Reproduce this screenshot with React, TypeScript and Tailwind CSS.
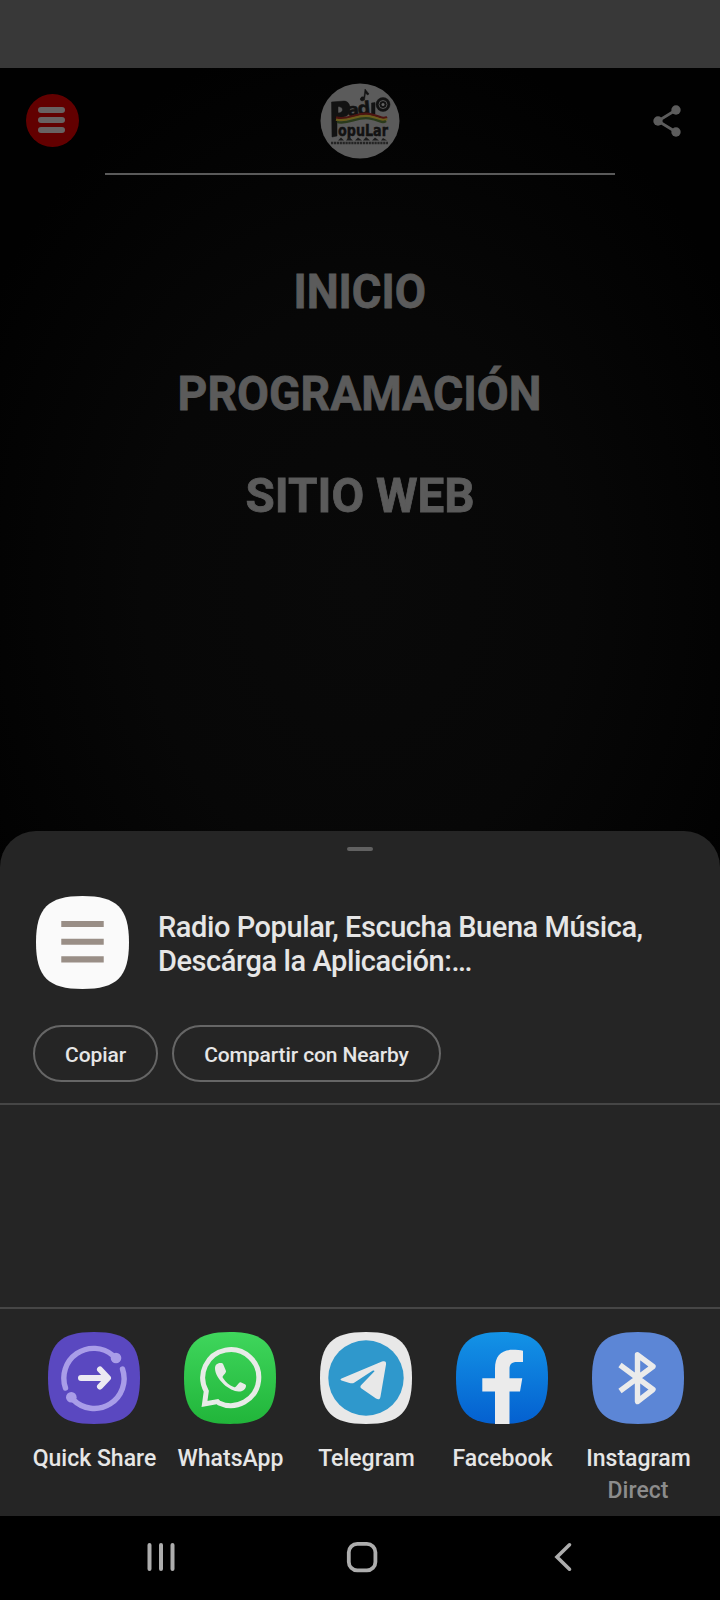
import React from "react";

const SQUIRCLE = "M0 46C0 12 12 0 46 0S92 12 92 46 80 92 46 92 0 80 0 46Z";

const menuItems = [
    { label: "INICIO", className: "scale-x-[0.925]" },
    { label: "PROGRAMACIÓN", className: "scale-x-[0.945]" },
    { label: "SITIO WEB", className: "scale-x-[0.97]" },
];

const targets = [
    { name: "Quick Share", icon: <QuickShareIcon /> },
    { name: "WhatsApp", icon: <WhatsAppIcon /> },
    { name: "Telegram", icon: <TelegramIcon /> },
    { name: "Facebook", icon: <FacebookIcon /> },
    { name: "Instagram", detail: "Direct", icon: <BluetoothIcon /> },
];

function QuickShareIcon() {
    return (
        <svg viewBox="0 0 92 92" className="size-[92px]">
            <path d={SQUIRCLE} fill="#5a48c0" />
            <g fill="none" stroke="#a99de8" strokeWidth="5.4" strokeLinecap="round">
                <path d="M17.500 56A29.800 29.800 0 0 1 65 23.500" />
                <path d="M74.500 37A29.800 29.800 0 0 1 25 67.500" />
            </g>
            <circle cx="68" cy="26" r="5.3" fill="#a99de8" />
            <circle cx="23.3" cy="65.3" r="5.3" fill="#a99de8" />
            <path d="M33 46H58M52 37.500L60 46L52 54.500" fill="none" stroke="#eceaf2" strokeWidth="6" strokeLinecap="round" strokeLinejoin="round" />
        </svg>
    );
}

function WhatsAppIcon() {
    return (
        <svg viewBox="0 0 92 92" className="size-[92px]">
            <defs>
                <linearGradient id="wa" x1="0" y1="0" x2="0" y2="1">
                    <stop offset="0" stopColor="#3fd65c" />
                    <stop offset="1" stopColor="#21b53a" />
                </linearGradient>
            </defs>
            <path d={SQUIRCLE} fill="url(#wa)" />
            <path d="M20.500 72L22.300 59.200A28 28 0 1 1 35 71L33.500 69.600Z" fill="none" stroke="#e8ebe8" strokeWidth="5" strokeLinejoin="miter" />
            <path d="M36.500 31c1.500 0 2.300.3 2.900 1.700l2.500 6c.4 1-.1 2-2.900 5.200-.6.7-.5 1.300 0 2 2.800 4.500 6.200 7.300 10.800 9.200.9.400 1.600.2 2.200-.5l3-3.700c.7-.8 1.400-.8 2.200-.4l3.800 1.800c1 .5 1.200 1 .9 2.500-.7 3-4 5-7.400 4.700-4.200-.4-10.200-2.900-15-7.600-5-4.900-8.500-10.800-8.500-15.500 0-3 1.800-5.400 5.500-5.400Z" fill="#e8ebe8" />
        </svg>
    );
}

function TelegramIcon() {
    return (
        <svg viewBox="0 0 92 92" className="size-[92px]">
            <path d={SQUIRCLE} fill="#e8e8e8" />
            <circle cx="46" cy="46" r="37.700" fill="#2f98cc" />
            <path d="M21.500 46.500L62 29.500C65 28.500 66.500 29.500 66 32.500L60.500 64.500C60 67.500 58.500 68 56 66.500L41.500 56.500C40 55.300 40 54.200 41.500 52.700L54.500 39.200C54.500 38.300 53.500 38.200 52.500 38.800L34.500 50.500C33 51.500 31.500 51.500 29.500 51L21.500 48.500C20.200 48 20.200 47.100 21.500 46.500Z" fill="#e8e8e8" />
        </svg>
    );
}

function FacebookIcon() {
    return (
        <svg viewBox="0 0 92 92" className="size-[92px]">
            <defs>
                <linearGradient id="fb" x1="0" y1="0" x2="0" y2="1">
                    <stop offset="0" stopColor="#1393e6" />
                    <stop offset="1" stopColor="#0460d0" />
                </linearGradient>
            </defs>
            <path d={SQUIRCLE} fill="url(#fb)" />
            <path d="M39 92V59.500H26.300V46.300H39V36.500C39 24 45 17.800 56.500 17.800C60.500 17.800 64.500 18.200 67 18.700V30H61C55.500 30 53.500 32.500 53.500 37V46.300H66.300L64 59.500H53.500V92Z" fill="#ebebeb" />
        </svg>
    );
}

function BluetoothIcon() {
    return (
        <svg viewBox="0 0 92 92" className="size-[92px]">
            <path d={SQUIRCLE} fill="#5c86d6" />
            <path d="M28 33L61 57.500L45.500 69.500V22.800L61 34.500L28 59" fill="none" stroke="#ebebeb" strokeWidth="5.400" strokeLinejoin="round" />
        </svg>
    );
}

function StationLogo() {
    return (
        <svg viewBox="0 0 80 76" className="h-[76px] w-[80px]" fontFamily="'DejaVu Sans', sans-serif" fontWeight="bold">
            <ellipse cx="40" cy="38" rx="39.500" ry="37.500" fill="#5b5b5b" />
            <g fill="#121212" stroke="#121212" strokeWidth=".5">
                <path d="M11.500 19L24 18C31 18 32 29 26.500 33L17 36V53L12 54ZM18 23.500V30C24 30 24 23.500 18 23.500Z" />
                <text x="28" y="33" fontSize="17" transform="rotate(-5 28 33)">a</text>
                <text x="38" y="32" fontSize="18" transform="rotate(-5 38 32)">d</text>
                <path d="M51.500 20L55 19.500V31H51.500Z" />
                <circle cx="63" cy="21.500" r="7" />
                <path d="M42 18A2.500 2 0 1 1 44 14L45 6L49 11L47.500 12L45.500 10L44.500 17Z" />
                <text x="18" y="53" fontSize="16" textLength="50" lengthAdjust="spacingAndGlyphs">opuLar</text>
            </g>
            <circle cx="63" cy="21.500" r="4" fill="none" stroke="#555" strokeWidth="1" />
            <circle cx="63" cy="21.500" r="1.500" fill="#656565" />
            <g fill="none" strokeWidth="2.400">
                <path d="M16 34.500C28 38 37 29 49 31S62 37 67 34" stroke="#4c1411" />
                <path d="M16 36.700C28 40 37 31.200 49 33.200S62 39 67 36" stroke="#6a5c1b" />
                <path d="M17 38.900C28 42 37 33.400 49 35.400S62 41 66 38" stroke="#2a3a1c" />
            </g>
            <g fill="#1c1c1c">
                <path d="M18 57.500L21 54.500L24 57.500ZM26 57.500L29 54L33 57.500ZM35 57.500L38 54.500L42 57.500ZM43 57.500L46 54L50 57.500ZM52 57.500L55 54.500L59 57.500ZM61 57.500L63 55L67 57.500Z" />
                <path d="M11 60H68" stroke="#242424" strokeWidth="2.500" strokeDasharray="2.200 .7" />
            </g>
        </svg>
    );
}

function Header() {
    return (
        <header className="flex flex-col items-center">
            <div className="flex h-[105px] w-full items-center justify-between px-[26px]">
                <button className="flex size-[53px] flex-col items-center justify-center gap-1 rounded-full bg-[#620000] pr-0.5 pb-px">
                    <span className="h-1.5 w-[27px] rounded-full bg-[#686262]" />
                    <span className="h-1.5 w-[27px] rounded-full bg-[#686262]" />
                    <span className="h-1.5 w-[27px] rounded-full bg-[#686262]" />
                </button>
                <StationLogo />
                <button className="flex w-[53px] justify-start pl-3">
                    <svg viewBox="0 0 28 34" className="h-[34px] w-7 shrink-0" fill="#5c5c5c">
                        <path d="M23 6L5 17L23 28" fill="none" stroke="#5c5c5c" strokeWidth="2.800" />
                        <circle cx="5" cy="17" r="4.700" />
                        <circle cx="23" cy="6" r="4.700" />
                        <circle cx="23" cy="28" r="4.700" />
                    </svg>
                </button>
            </div>
            <div className="h-0.5 w-[510px] bg-[#5a5a5a]" />
        </header>
    );
}

function ShareSheet() {
    return (
        <section className="flex h-[685px] flex-col rounded-t-[36px] bg-[#252525] text-[#e6e6e6]">
            <div className="mt-4 h-1 w-[26px] self-center rounded-full bg-[#616161]" />
            <div className="mt-[45px] flex h-[93px] items-center pl-9">
                <svg viewBox="0 0 92 92" className="size-[93px] shrink-0">
                    <path d={SQUIRCLE} fill="#fafafa" />
                    <path d="M25 27.700H67M25 45.200H67M25 62.700H67" stroke="#998e86" strokeWidth="6" />
                </svg>
                <p className="ml-[29px] pt-0.5 text-[29px] leading-[34px] font-medium tracking-[-0.43px] whitespace-nowrap">
                    Radio Popular, Escucha Buena Música,
                    <br />
                    Descárga la Aplicación:<span className="tracking-[-1.500px]">...</span>
                </p>
            </div>
            <div className="mt-9 flex gap-3.5 pl-[33px] text-[21px] font-medium tracking-[-0.1px]">
                <button className="h-[57px] w-[125px] rounded-full border-2 border-[#666] pt-1">Copiar</button>
                <button className="h-[57px] w-[269px] rounded-full border-2 border-[#666] pt-1">Compartir con Nearby</button>
            </div>
            <div className="mt-[21px] h-[206px] border-y-2 border-[#464646]" />
            <ul className="mt-[23px] flex pl-[26px]">
                {targets.map((target) => (
                    <li key={target.name} className="flex w-[136px] shrink-0 flex-col items-center text-[23px] leading-8 font-medium whitespace-nowrap">
                        {target.icon}
                        <span className="mt-[19px] pl-px">{target.name}</span>
                        {target.detail && <span className="text-[#8c8c8c]">{target.detail}</span>}
                    </li>
                ))}
            </ul>
        </section>
    );
}

function NavBar() {
    return (
        <nav className="flex h-[84px] items-start bg-black pt-[25px] pl-[146px]">
            <svg viewBox="0 0 30 32" className="h-8 w-[30px]" stroke="#adadad" strokeWidth="4" strokeLinecap="round">
                <path d="M3.500 4V28M15 4V28M26.500 4V28" />
            </svg>
            <svg viewBox="0 0 32 32" className="ml-[170px] size-8" fill="none" stroke="#adadad" strokeWidth="3.800">
                <rect x="2.800" y="2.800" width="26.600" height="26.600" rx="8.500" />
            </svg>
            <svg viewBox="0 0 20 32" className="ml-[175px] h-8 w-5" fill="none" stroke="#adadad" strokeWidth="3.600" strokeLinecap="round">
                <path d="M16.500 3.800L4 16L16.500 28.200" />
            </svg>
        </nav>
    );
}

export default function App() {
    return (
        <div className="flex h-[1600px] w-[720px] flex-col overflow-hidden bg-black font-[Roboto,sans-serif]">
            <div className="h-[68px] shrink-0 bg-[#383838]" />
            {/* runs on behind the sheet's rounded corners */}
            <div className="-mb-10 flex h-[803px] shrink-0 flex-col bg-[radial-gradient(ellipse_60%_70%_at_50%_65%,#090909,#070707_50%,#010101)]">
                <Header />
                <nav className="mt-[66px] flex flex-col items-center text-[49px] leading-[102px] font-bold text-[#5b5b5b] [-webkit-text-stroke:0.8px_#5b5b5b]">
                    {menuItems.map((item) => (
                        <a key={item.label} className={item.className}>
                            {item.label}
                        </a>
                    ))}
                </nav>
            </div>
            <ShareSheet />
            <NavBar />
        </div>
    );
}
